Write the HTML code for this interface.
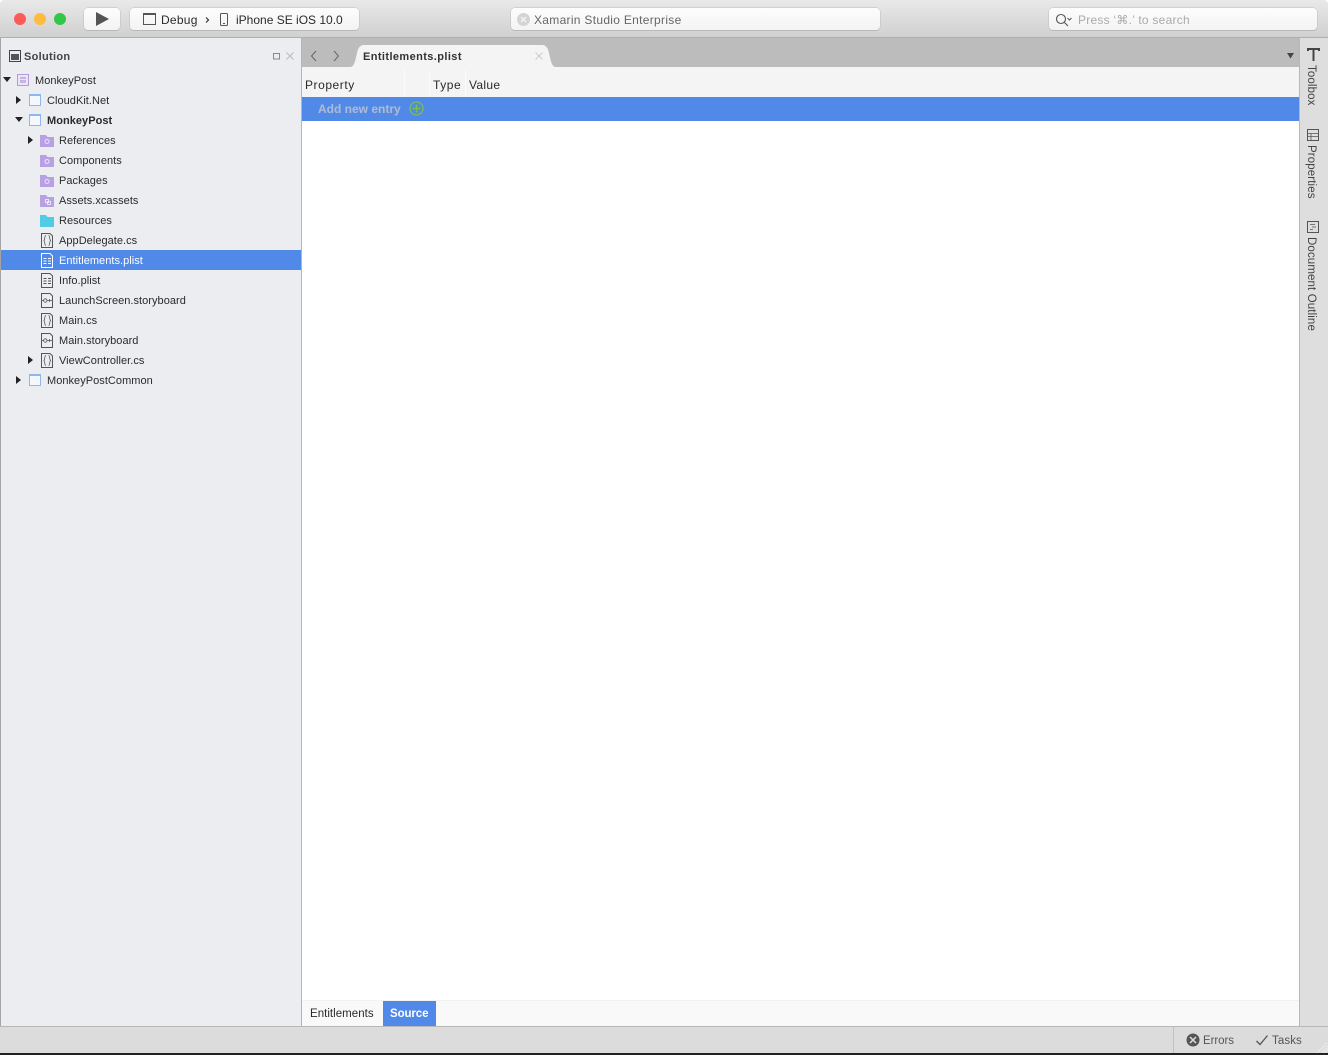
<!DOCTYPE html>
<html><head><meta charset="utf-8"><style>
html,body{margin:0;padding:0;background:#fff;}
body{width:1328px;height:1055px;position:relative;overflow:hidden;font-family:"Liberation Sans","DejaVu Sans",sans-serif;color:#2a2a2a;}
div,span,svg{position:absolute;box-sizing:border-box;}
.t{white-space:nowrap;font-size:11px;line-height:14px;letter-spacing:.04px;}
.btn{background:linear-gradient(#fdfdfd,#f3f3f3);border-radius:4px;box-shadow:0 0 0 .5px #bdbdbd,0 1px 0 #b5b5b5;}
.v{transform-origin:0 0;transform:rotate(90deg);color:#444;font-size:11.5px;letter-spacing:.12px;}
</style></head><body>
<!-- toolbar -->
<div style="left:0;top:0;width:1328px;height:38px;background:linear-gradient(#e9e9e9,#d0d0d0);border-bottom:1px solid #b0b0b0;border-radius:4px 4px 0 0"></div>
<div style="left:14px;top:13px;width:12px;height:12px;border-radius:50%;background:#fc5b57"></div>
<div style="left:34px;top:13px;width:12px;height:12px;border-radius:50%;background:#fdbb40"></div>
<div style="left:54px;top:13px;width:12px;height:12px;border-radius:50%;background:#33c748"></div>
<div class="btn" style="left:84px;top:8px;width:36px;height:22px"></div>
<svg style="left:96px;top:12px" width="13" height="14"><path d="M0 0L13 7L0 14Z" fill="#555"/></svg>
<div class="btn" style="left:130px;top:8px;width:229px;height:22px"></div>
<svg style="left:143px;top:13px" width="13" height="12"><rect x=".5" y=".5" width="12" height="11" fill="none" stroke="#555"/><rect x="0" y="0" width="13" height="2" fill="#555"/></svg>
<div class="t" style="left:161px;top:13px;font-size:12px;letter-spacing:.25px">Debug</div>
<svg style="left:205px;top:17px" width="5" height="6"><path d="M1 .5L3.500 3L1 5.500" fill="none" stroke="#333" stroke-width="1.2"/></svg>
<svg style="left:220px;top:13px" width="8" height="13"><rect x=".5" y=".5" width="7" height="12" rx="1" fill="none" stroke="#555"/><rect x="3" y="10" width="2" height="1" fill="#555"/></svg>
<div class="t" style="left:236px;top:13px;font-size:12px;letter-spacing:0">iPhone SE iOS 10.0</div>
<div class="btn" style="left:511px;top:8px;width:369px;height:22px"></div>
<div style="left:517px;top:13px;width:13px;height:13px;border-radius:50%;background:#d4d4d4"></div>
<svg style="left:520px;top:16px" width="7" height="7"><path d="M1 1L6 6M6 1L1 6" stroke="#f5f5f5" stroke-width="1.4"/></svg>
<div class="t" style="left:534px;top:13px;font-size:12px;letter-spacing:.3px;color:#666">Xamarin Studio Enterprise</div>
<div class="btn" style="left:1049px;top:8px;width:268px;height:22px"></div>
<svg style="left:1055px;top:13px" width="18" height="14"><circle cx="6" cy="6" r="4.5" fill="none" stroke="#555" stroke-width="1.1"/><path d="M9.500 9.500L13 13" stroke="#555" stroke-width="1.1"/><path d="M12.500 5L14.500 7L16.500 5" fill="none" stroke="#555"/></svg>
<div class="t" style="left:1078px;top:13px;font-size:12px;letter-spacing:.25px;color:#aaa">Press ‘⌘.’ to search</div>

<!-- sidebar -->
<div style="left:0;top:38px;width:302px;height:988px;background:#ecedf1;border-right:1px solid #b5b5b5;border-left:1px solid #a5a5a5"></div>
<svg style="left:9px;top:50px" width="12" height="12"><rect x=".5" y=".5" width="11" height="11" fill="none" stroke="#444"/><rect x="2" y="4" width="8" height="6" fill="#555"/></svg>
<div class="t" style="left:24px;top:50px;font-weight:bold;color:#444;letter-spacing:.3px">Solution</div>
<svg style="left:273px;top:52px" width="22" height="8"><rect x=".5" y="1.500" width="6" height="5.500" fill="none" stroke="#888"/><path d="M13.500 .5L20.500 7.500M20.500 .5L13.500 7.500" stroke="#bbb"/></svg>

<svg style="left:0;top:70px" width="60" height="320" fill="none">
<path d="M3 7H11L7 12Z" fill="#222"/>
<path d="M16 26V34L21 30Z" fill="#222"/>
<path d="M15 47H23L19 52Z" fill="#222"/>
<path d="M28 66V74L33 70Z" fill="#222"/>
<path d="M28 286V294L33 290Z" fill="#222"/>
<path d="M16 306V314L21 310Z" fill="#222"/>
<!-- solution icon -->
<rect x="17.500" y="4.500" width="11" height="11" fill="#ebe5f7" stroke="#b39ddb"/><rect x="20" y="7" width="6" height="2" fill="#c5b4e8"/><rect x="20" y="10" width="6" height="3" fill="#c5b4e8"/>
<!-- project icons -->
<g fill="#f4f8fe" stroke="#8db8ec">
<rect x="29.500" y="24.500" width="11" height="11"/><rect x="29.500" y="44.500" width="11" height="11"/><rect x="29.500" y="304.500" width="11" height="11"/></g>
<g fill="#8db8ec"><rect x="29" y="24" width="12" height="2"/><rect x="29" y="44" width="12" height="2"/><rect x="29" y="304" width="12" height="2"/></g>
<!-- folders -->
<g fill="#b8a1e3"><path d="M40 65H46L47.500 67H54V77H40Z"/><path d="M40 85H46L47.500 87H54V97H40Z"/><path d="M40 105H46L47.500 107H54V117H40Z"/><path d="M40 125H46L47.500 127H54V137H40Z"/></g>
<g stroke="#ece6f8" stroke-width="1"><circle cx="47" cy="71.500" r="2"/><circle cx="47" cy="91.500" r="2"/><circle cx="47" cy="111.500" r="2"/><rect x="45.500" y="129.500" width="3" height="3"/><rect x="47.500" y="131.500" width="3" height="3"/></g>
<path d="M40 145H46L47.500 147H54V157H40Z" fill="#54cbe4"/>
</svg>
<!-- selected row -->
<div style="left:1px;top:250px;width:300px;height:20px;background:#5089e8"></div>
<svg style="left:0;top:70px" width="60" height="320" fill="none" stroke="#555">
<path d="M41.500 163.500H50L52.500 166V177.500H41.500Z"/><path d="M46 165.500C44 165.500 45.500 170.500 43.500 170.500C45.500 170.500 44 175.500 46 175.500M48.500 165.500C50.500 165.500 49 170.500 51 170.500C49 170.500 50.500 175.500 48.500 175.500" stroke-width=".8"/>
<g stroke="#fff"><path d="M41.500 183.500H50L52.500 186V197.500H41.500Z"/><path d="M43.500 188.500H46.500M48 188.500H51M43.500 191H46.500M48 191H51M43.500 193.500H46.500M48 193.500H51" stroke-width=".9"/></g>
<path d="M41.500 203.500H50L52.500 206V217.500H41.500Z"/><path d="M43.500 208.500H46.500M48 208.500H51M43.500 211H46.500M48 211H51M43.500 213.500H46.500M48 213.500H51" stroke-width=".9"/>
<path d="M41.500 223.500H50L52.500 226V237.500H41.500Z"/><path d="M41.500 230.500H43.500M47 230.500H53" stroke-width=".8"/><circle cx="45.300" cy="230.500" r="1.700" stroke-width=".8"/><path d="M49.500 229V232" stroke-width=".8"/>
<path d="M41.500 243.500H50L52.500 246V257.500H41.500Z"/><path d="M46 245.500C44 245.500 45.500 250.500 43.500 250.500C45.500 250.500 44 255.500 46 255.500M48.500 245.500C50.500 245.500 49 250.500 51 250.500C49 250.500 50.500 255.500 48.500 255.500" stroke-width=".8"/>
<path d="M41.500 263.500H50L52.500 266V277.500H41.500Z"/><path d="M41.500 270.500H43.500M47 270.500H53" stroke-width=".8"/><circle cx="45.300" cy="270.500" r="1.700" stroke-width=".8"/><path d="M49.500 269V272" stroke-width=".8"/>
<path d="M41.500 283.500H50L52.500 286V297.500H41.500Z"/><path d="M46 285.500C44 285.500 45.500 290.500 43.500 290.500C45.500 290.500 44 295.500 46 295.500M48.500 285.500C50.500 285.500 49 290.500 51 290.500C49 290.500 50.500 295.500 48.500 295.500" stroke-width=".8"/>
</svg>
<div class="t" style="left:35px;top:74px">MonkeyPost</div>
<div class="t" style="left:47px;top:94px">CloudKit.Net</div>
<div class="t" style="left:47px;top:114px;font-weight:bold">MonkeyPost</div>
<div class="t" style="left:59px;top:134px">References</div>
<div class="t" style="left:59px;top:154px">Components</div>
<div class="t" style="left:59px;top:174px">Packages</div>
<div class="t" style="left:59px;top:194px">Assets.xcassets</div>
<div class="t" style="left:59px;top:214px">Resources</div>
<div class="t" style="left:59px;top:234px">AppDelegate.cs</div>
<div class="t" style="left:59px;top:254px;color:#fff">Entitlements.plist</div>
<div class="t" style="left:59px;top:274px">Info.plist</div>
<div class="t" style="left:59px;top:294px">LaunchScreen.storyboard</div>
<div class="t" style="left:59px;top:314px">Main.cs</div>
<div class="t" style="left:59px;top:334px">Main.storyboard</div>
<div class="t" style="left:59px;top:354px">ViewController.cs</div>
<div class="t" style="left:47px;top:374px">MonkeyPostCommon</div>

<!-- tab bar -->
<div style="left:302px;top:38px;width:997px;height:29px;background:#bcbcbc"></div>
<svg style="left:309px;top:50px" width="36" height="12" fill="none" stroke="#666"><path d="M7 1L2.500 6L7 11M25 1L29.500 6L25 11"/></svg>
<svg style="left:350px;top:45px" width="206" height="22"><path d="M0 22C4 22 5 17 7 8C8 3 10 0 14 0H192C196 0 198 3 199 8C201 17 202 22 206 22Z" fill="#f4f4f4"/></svg>
<div class="t" style="left:363px;top:50px;font-weight:bold;color:#333;letter-spacing:.4px">Entitlements.plist</div>
<svg style="left:535px;top:52px" width="8" height="8"><path d="M.5 .5L7.500 7.500M7.500 .5L.5 7.500" stroke="#ccc"/></svg>
<svg style="left:1287px;top:53px" width="7" height="6"><path d="M0 0H7L3.500 5.500Z" fill="#444"/></svg>

<!-- header -->
<div style="left:302px;top:67px;width:997px;height:30px;background:#f4f4f4"></div>
<div style="left:404px;top:70px;width:1px;height:27px;background:#fbfbfb"></div>
<div style="left:429px;top:70px;width:1px;height:27px;background:#fbfbfb"></div>
<div style="left:465px;top:70px;width:1px;height:27px;background:#fbfbfb"></div>
<div class="t" style="left:305px;top:78px;font-size:12px;letter-spacing:.55px">Property</div>
<div class="t" style="left:433px;top:78px;font-size:12px;letter-spacing:.55px">Type</div>
<div class="t" style="left:469px;top:78px;font-size:12px;letter-spacing:.3px">Value</div>
<div style="left:302px;top:97px;width:997px;height:24px;background:#5089e8"></div>
<div class="t" style="left:318px;top:102px;font-size:12px;font-weight:bold;color:#a9bbdc;letter-spacing:0;text-shadow:0 0 1px #7f93b8">Add new entry</div>
<svg style="left:409px;top:101px" width="15" height="15" fill="none" stroke="#7cc04b"><circle cx="7.500" cy="7.500" r="6.500" stroke-width="1.200"/><path d="M3.500 7.500H11.500M7.500 3.500V11.500" stroke-width="1.500"/></svg>

<!-- bottom tabs -->
<div style="left:302px;top:1000px;width:997px;height:26px;background:#f9f9f9;border-top:1px solid #f2f2f2"></div>
<div class="t" style="left:310px;top:1007px;font-size:11.5px;letter-spacing:.03px">Entitlements</div>
<div style="left:383px;top:1001px;width:53px;height:25px;background:#5089e8"></div>
<div class="t" style="left:390px;top:1007px;font-weight:bold;color:#fff;font-size:11.5px;letter-spacing:-.1px">Source</div>

<!-- right dock -->
<div style="left:1299px;top:38px;width:29px;height:988px;background:#dedede;border-left:1px solid #b8b8b8"></div>
<svg style="left:1307px;top:48px" width="13" height="13"><path d="M1 3V1H12V3M6.500 1V13" fill="none" stroke="#444" stroke-width="2"/></svg>
<svg style="left:1307px;top:129px" width="12" height="12" fill="none" stroke="#555"><rect x=".5" y=".5" width="11" height="11"/><path d="M.5 4.500H11.500M.5 7.500H11.500M4 4.500V11.500" stroke-width=".8"/></svg>
<svg style="left:1307px;top:221px" width="12" height="12" fill="none" stroke="#555"><rect x=".5" y=".5" width="11" height="11"/><path d="M3 3.500H8M5 6H9M3 8.500H6" stroke-width=".8"/></svg>
<div class="t v" style="left:1318px;top:65px">Toolbox</div>
<div class="t v" style="left:1318px;top:145px">Properties</div>
<div class="t v" style="left:1318px;top:237px">Document Outline</div>

<!-- status bar -->
<div style="left:0;top:1026px;width:1328px;height:29px;background:#dcdcdc;border-top:1px solid #b8b8b8;border-bottom:2px solid #222"></div>
<div style="left:1173px;top:1027px;width:1px;height:26px;background:#c2c2c2"></div>
<svg style="left:1186px;top:1033px" width="14" height="14"><circle cx="7" cy="7" r="6.500" fill="#555"/><path d="M4 4L10 10M10 4L4 10" stroke="#ddd" stroke-width="1.500"/></svg>
<div class="t" style="left:1203px;top:1034px;color:#555;font-size:11.5px;letter-spacing:-.05px">Errors</div>
<svg style="left:1256px;top:1034px" width="12" height="12"><path d="M.5 7L4 10.500L11.500 1.500" fill="none" stroke="#555" stroke-width="1.300"/></svg>
<div class="t" style="left:1272px;top:1034px;color:#555;font-size:11.5px;letter-spacing:.1px">Tasks</div>
<svg style="left:1316px;top:1042px" width="12" height="11"><path d="M11 1L1 11M12 4L5 11M12 7L8 11" stroke="#f5f5f5" stroke-dasharray="1.500 1"/></svg>
</body></html>
